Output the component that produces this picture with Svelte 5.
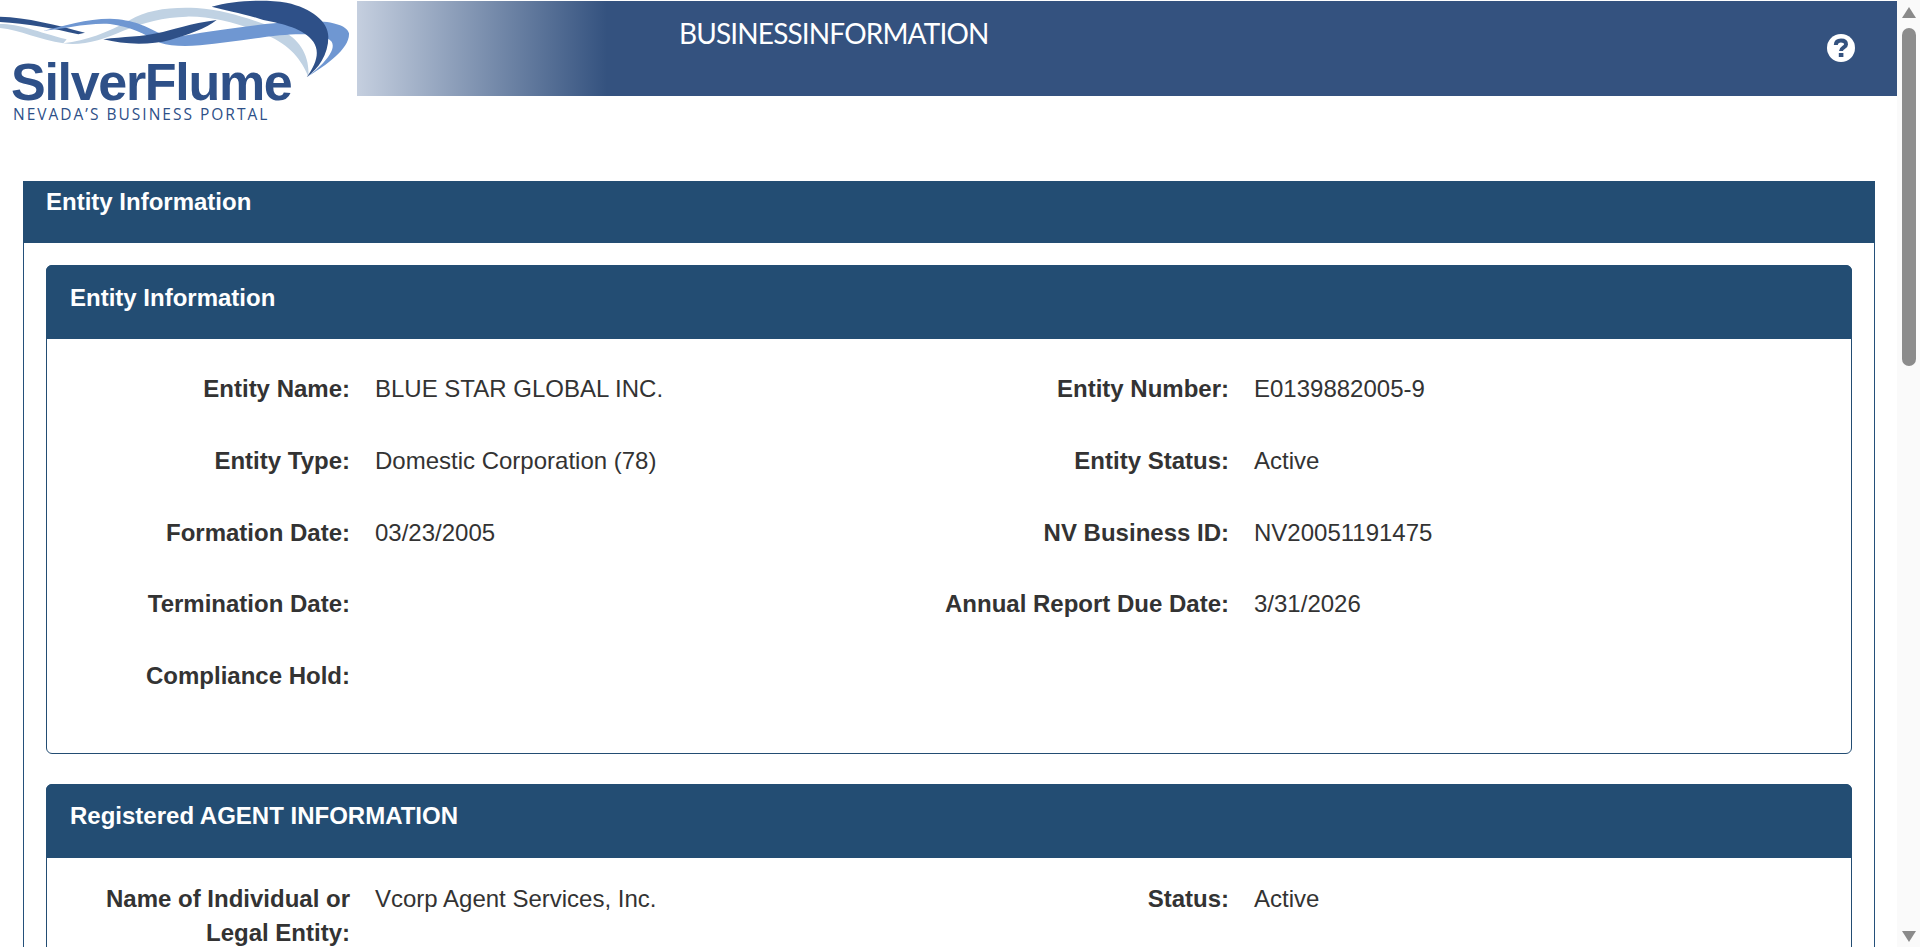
<script>
  // rows of the entity card, left and right columns
  const entityRows = [
    ["Entity Name:", "BLUE STAR GLOBAL INC.", "Entity Number:", "E0139882005-9"],
    ["Entity Type:", "Domestic Corporation (78)", "Entity Status:", "Active"],
    ["Formation Date:", "03/23/2005", "NV Business ID:", "NV20051191475"],
    ["Termination Date:", "", "Annual Report Due Date:", "3/31/2026"],
    ["Compliance Hold:", "", "", ""],
  ];
</script>

<div class="page">
  <div class="content">
    <header class="topbar">
      <div class="logo">
        <svg class="swoosh" viewBox="0 0 1071 390" width="357" height="130" aria-hidden="true">
          <!-- thin strands on the left -->
          <path fill="#c0d2e3" d="M0 72 C60 72 110 95 200 118 L190 130 C120 120 60 90 0 84 Z" />
          <path fill="#2e5088" d="M0 50 C80 52 170 75 255 98 L235 103 C160 85 80 70 0 66 Z" />
          <!-- pale ribbon -->
          <path fill="#c0d2e3" d="M190 130 C260 120 320 100 390 60 C440 30 510 20 590 24 C680 30 760 60 840 90 C900 115 930 170 925 230 C905 180 870 135 800 105 C720 70 630 48 560 50 C490 52 430 68 370 92 C310 118 250 138 190 130 Z" />
          <!-- mid blue ribbon -->
          <path fill="#6f97d2" d="M130 92 C190 78 260 56 330 56 C400 58 440 80 480 100 L520 112 C620 96 760 72 900 64 C970 60 1040 70 1047 100 C1050 145 980 195 920 232 C970 195 1010 150 995 125 C975 100 900 100 840 106 C750 116 680 128 600 136 C550 140 510 138 480 128 C430 100 390 80 330 72 C260 68 190 88 130 92 Z" />
          <!-- dark ribbon, lower band and wing -->
          <path fill="#2e5088" d="M310 118 C370 110 430 110 470 100 C520 90 570 70 650 60 C620 85 560 105 510 120 C450 136 370 134 310 118 Z" />
          <path fill="#2e5088" d="M635 20 C700 2 790 -3 860 8 C935 24 985 65 985 110 C985 165 955 205 920 232 C950 190 960 155 940 125 C910 85 850 72 790 60 C730 40 680 32 635 20 Z" />
        </svg>
        <div class="logo-name">SilverFlume</div>
        <div class="logo-sub">NEVADA&rsquo;S BUSINESS PORTAL</div>
      </div>
      <div class="banner">
        <h1>BUSINESSINFORMATION</h1>
        <svg class="help" viewBox="0 0 28 28" width="28" height="28" aria-label="Help">
          <circle cx="14" cy="14" r="14" fill="#fff" />
          <path fill="none" stroke="#34527f" stroke-width="4" d="M8.8 11 C9 7.8 11.2 6.6 14 6.6 C17 6.6 19 8 19 10.4 C19 13.4 14.2 13.4 14 17" />
          <rect x="11.8" y="19" width="4.6" height="4" fill="#34527f" />
        </svg>
      </div>
    </header>

    <main class="panel">
      <div class="panel-head">Entity Information</div>
      <div class="panel-body">
        <section class="card">
          <h2>Entity Information</h2>
          <div class="rows">
            {#each entityRows as row}
              <div class="row">
                <div class="label">{row[0]}</div>
                <div class="value">{row[1]}</div>
                <div class="label">{row[2]}</div>
                <div class="value">{row[3]}</div>
              </div>
            {/each}
          </div>
        </section>

        <section class="card">
          <h2>Registered AGENT INFORMATION</h2>
          <div class="rows agent">
            <div class="row">
              <div class="label">Name of Individual or Legal Entity:</div>
              <div class="value">Vcorp Agent Services, Inc.</div>
              <div class="label">Status:</div>
              <div class="value">Active</div>
            </div>
          </div>
        </section>
      </div>
    </main>
  </div>

  <div class="scrollbar" aria-hidden="true">
    <span class="arrow up"></span>
    <span class="thumb"></span>
    <span class="arrow down"></span>
  </div>
</div>

<style>
  :global(body) {
    background: #fff;
    overflow: hidden;
  }

  .page {
    display: flex;
    height: 947px;
    overflow: hidden;
    font-family: "Liberation Sans", Arial, sans-serif;
    font-size: 24px;
    color: #333;
  }

  .content {
    flex: 1;
    min-width: 0;
  }

  .topbar {
    display: flex;
    height: 181px;
    align-items: flex-start;
  }

  .logo {
    position: relative;
    width: 357px;
    height: 125px;
    flex: none;
  }

  .swoosh {
    position: absolute;
    left: 0;
    top: 0;
  }

  .logo-name {
    position: absolute;
    left: 11px;
    top: 57px;
    font-size: 52px;
    line-height: 50px;
    font-weight: 700;
    letter-spacing: -1.3px;
    color: #2e5088;
  }

  .logo-sub {
    position: absolute;
    left: 13px;
    top: 107px;
    font-family: "Open Sans", sans-serif;
    font-size: 15.5px;
    line-height: 14px;
    letter-spacing: 2px;
    color: #2e5088;
  }

  .banner {
    flex: 1;
    height: 95px;
    margin-top: 1px;
    display: flex;
    justify-content: space-between;
    padding: 15px 42px 0 322px;
    box-sizing: border-box;
    background: linear-gradient(90deg, #c5cfdf 0, #34527f 250px);
  }

  h1 {
    margin: 0;
    font-family: Lato, sans-serif;
    font-weight: 400;
    font-size: 28px;
    line-height: 34px;
    letter-spacing: -0.85px;
    color: #fff;
  }

  .help {
    margin-top: 18px;
  }

  .panel {
    margin: 0 22px 0 23px;
    border: 1px solid #24507a;
    border-top: none;
    border-bottom: none;
  }

  .panel-head {
    height: 62px;
    margin: 0 -1px;
    padding: 4px 23px 0;
    box-sizing: border-box;
    background: #234d73;
    color: #fff;
    font-size: 24px;
    line-height: 34px;
    font-weight: 700;
  }

  .panel-body {
    padding: 22px 22px 0;
  }

  .card {
    border: 1px solid #234d73;
    border-radius: 6px;
    margin-bottom: 30px;
  }

  h2 {
    margin: -1px -1px 0;
    height: 74px;
    padding: 0 24px 9px;
    box-sizing: border-box;
    display: flex;
    align-items: center;
    background: #234d73;
    border-radius: 6px 6px 0 0;
    color: #fff;
    font-size: 24px;
    font-weight: 700;
  }

  .rows {
    padding: 33px 0 22px;
  }

  .rows.agent {
    padding-top: 24px;
  }

  .row {
    display: grid;
    grid-template-columns: 303px 526px 303px 1fr;
    column-gap: 25px;
    min-height: 71.8px;
    line-height: 34.3px;
  }

  .label {
    text-align: right;
    font-weight: 700;
  }

  .scrollbar {
    flex: none;
    width: 23px;
    box-sizing: border-box;
    padding: 7px 5px 5px;
    display: flex;
    flex-direction: column;
    align-items: center;
    background: #fafafa;
  }

  .arrow {
    width: 0;
    height: 0;
    border-left: 7px solid transparent;
    border-right: 7px solid transparent;
  }

  .arrow.up {
    border-bottom: 11px solid #8a8a8a;
  }

  .arrow.down {
    margin-top: auto;
    border-top: 11px solid #8a8a8a;
  }

  .thumb {
    width: 14px;
    height: 338px;
    margin-top: 10px;
    border-radius: 7px;
    background: #8c8c8c;
  }
</style>
